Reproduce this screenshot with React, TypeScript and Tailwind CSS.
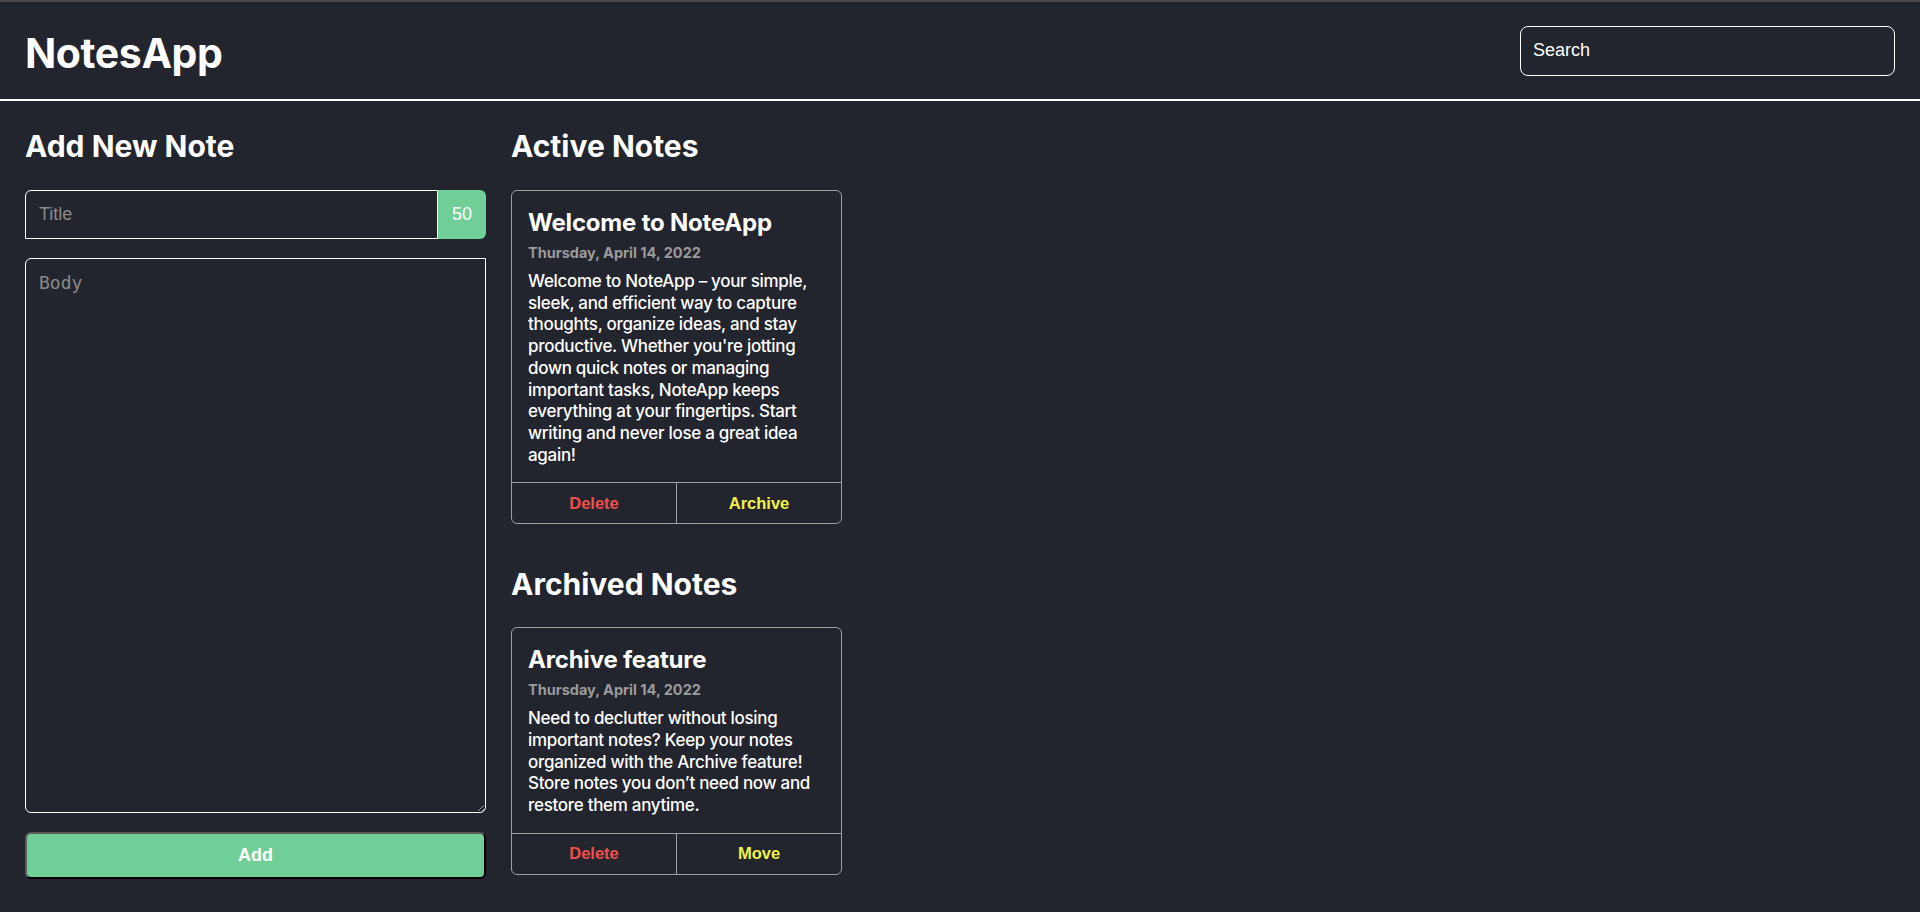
import React from "react";

const jakarta = "font-['Inter','Noto_Sans',sans-serif]";

function NoteCard({
  title,
  date,
  body,
  action,
}: {
  title: string;
  date: string;
  body: string;
  action: string;
}) {
  return (
    <div className="w-[331px] rounded-md border border-[#a0a0a0] flex flex-col">
      <div className="px-[16px] pt-[16px] pb-[16px]">
        <h3 className={`${jakarta} text-[24px] leading-[32px] font-bold text-white tracking-[-0.2px]`}>{title}</h3>
        <p className={`${jakarta} mt-[4px] text-[14.5px] leading-[20px] font-bold text-[#9b9b9b]`}>{date}</p>
        <p className={`${jakarta} mt-[8px] text-[17px] leading-[21.7px] font-medium text-white tracking-[-0.3px]`}>{body}</p>
      </div>
      <div className="flex border-t border-[#a0a0a0] h-[41px]">
        <button className="flex-1 font-['Liberation_Sans',Arial,sans-serif] font-bold text-[16.5px] text-[#f0504a] border-r border-[#a0a0a0]">
          Delete
        </button>
        <button className="flex-1 font-['Liberation_Sans',Arial,sans-serif] font-bold text-[16.5px] text-[#f2f24a]">
          {action}
        </button>
      </div>
    </div>
  );
}

export default function App() {
  return (
    <div className="min-h-screen bg-[#22242e] border-t-2 border-[#4a4a4a] text-white">
      <header className="h-[99px] flex items-center justify-between px-[25px] border-b-2 border-white">
        <h1 className={`${jakarta} text-[41px] font-bold tracking-[-0.4px] leading-none pt-[5px]`}>NotesApp</h1>
        <input
          type="text"
          placeholder="Search"
          className="w-[375px] h-[50px] rounded-lg border border-white bg-transparent px-[12px] text-[18px] font-['Liberation_Sans',Arial,sans-serif] text-white placeholder:text-white outline-none"
        />
      </header>
      <main className="flex gap-[25px] px-[25px] pt-[27px]">
        <section className="w-[461px] flex flex-col">
          <h2 className={`${jakarta} text-[30px] leading-[36px] font-bold`}>Add New Note</h2>
          <div className="mt-[26px] flex h-[49px]">
            <input
              type="text"
              placeholder="Title"
              className="flex-1 min-w-0 rounded-tl-md border border-white bg-transparent px-[13px] text-[18px] font-['Liberation_Sans',Arial,sans-serif] text-white placeholder:text-[#8a8a8a] outline-none"
            />
            <div className="w-[48px] bg-[#6fcf97] rounded-r-md flex items-center justify-center text-[18px] font-['Liberation_Sans',Arial,sans-serif] text-white">
              50
            </div>
          </div>
          <textarea
            placeholder="Body"
            className="mt-[19px] h-[555px] rounded-tl-md rounded-b-md border border-white bg-transparent px-[13px] py-[10px] text-[18px] font-['DejaVu_Sans_Mono',monospace] text-white placeholder:text-[#8a8a8a] outline-none"
          />
          <button className="mt-[19px] h-[47px] rounded-md bg-[#6fcf97] border-2 border-t-[#5a5a5a] border-l-[#5a5a5a] border-b-black border-r-black text-white font-['Liberation_Sans',Arial,sans-serif] font-bold text-[18px]">
            Add
          </button>
        </section>
        <section className="flex flex-col">
          <h2 className={`${jakarta} text-[30px] leading-[36px] font-bold`}>Active Notes</h2>
          <div className="mt-[26px]">
            <NoteCard
              title="Welcome to NoteApp"
              date="Thursday, April 14, 2022"
              body="Welcome to NoteApp – your simple, sleek, and efficient way to capture thoughts, organize ideas, and stay productive. Whether you're jotting down quick notes or managing important tasks, NoteApp keeps everything at your fingertips. Start writing and never lose a great idea again!"
              action="Archive"
            />
          </div>
          <h2 className={`${jakarta} mt-[42px] text-[30px] leading-[36px] font-bold`}>Archived Notes</h2>
          <div className="mt-[25px]">
            <NoteCard
              title="Archive feature"
              date="Thursday, April 14, 2022"
              body="Need to declutter without losing important notes? Keep your notes organized with the Archive feature! Store notes you don’t need now and restore them anytime."
              action="Move"
            />
          </div>
        </section>
      </main>
    </div>
  );
}
